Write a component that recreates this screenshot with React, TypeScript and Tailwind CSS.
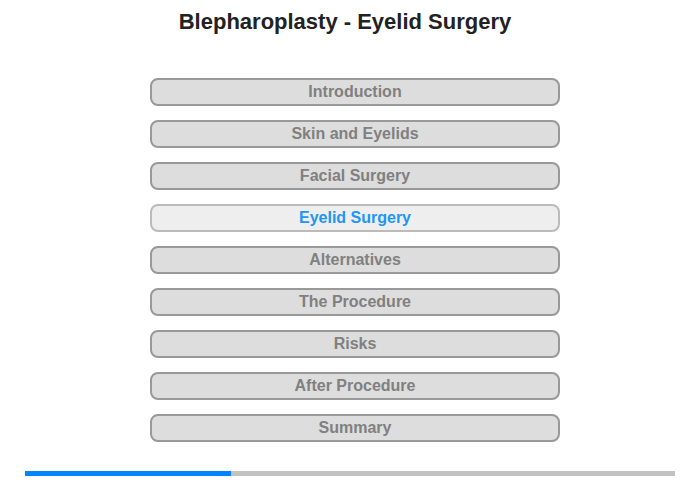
const sections = [
  "Introduction",
  "Skin and Eyelids",
  "Facial Surgery",
  "Eyelid Surgery",
  "Alternatives",
  "The Procedure",
  "Risks",
  "After Procedure",
  "Summary",
];

const current = 3;

export default function App() {
  return (
    <div className="w-[700px] h-[480px] bg-white font-['Liberation_Sans',Arial,sans-serif]">
      <h1 className="pt-[9px] pr-[10px] text-center text-[22px] leading-[26px] font-bold text-[#222222]">
        Blepharoplasty - Eyelid Surgery
      </h1>

      {/* chapter menu */}
      <div className="mt-[43px] flex flex-col gap-[14px] pl-[150px]">
        {sections.map((label, i) => (
          <button
            key={label}
            className={
              i === current
                ? "w-[410px] h-[28px] rounded-[8px] border-2 border-[#bbbbbb] bg-[#eeeeee] text-[16px] leading-[24px] font-bold text-[#2196f3]"
                : "w-[410px] h-[28px] rounded-[8px] border-2 border-[#999999] bg-[#dddddd] text-[16px] leading-[24px] font-bold text-[#808080]"
            }
          >
            {label}
          </button>
        ))}
      </div>

      {/* progress */}
      <div className="mt-[29px] mx-[25px] h-[5px] flex bg-[#c2c2c2]">
        <div className="w-[206px] h-full bg-[#0084ff]" />
      </div>
    </div>
  );
}
